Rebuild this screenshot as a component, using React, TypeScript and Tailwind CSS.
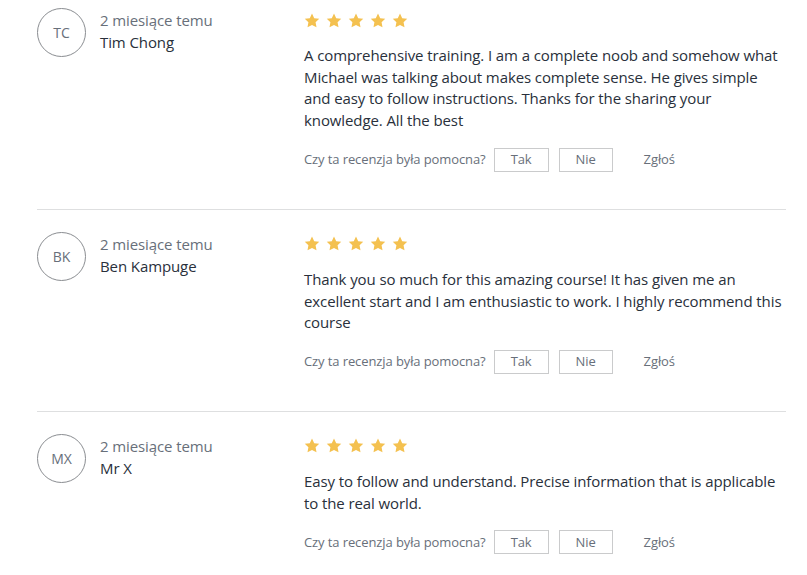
const REVIEWS = [
  {
    initials: "TC",
    when: "2 miesiące temu",
    name: "Tim Chong",
    text: "A comprehensive training. I am a complete noob and somehow what Michael was talking about makes complete sense. He gives simple and easy to follow instructions. Thanks for the sharing your knowledge. All the best",
  },
  {
    initials: "BK",
    when: "2 miesiące temu",
    name: "Ben Kampuge",
    text: "Thank you so much for this amazing course! It has given me an excellent start and I am enthusiastic to work. I highly recommend this course",
  },
  {
    initials: "MX",
    when: "2 miesiące temu",
    name: "Mr X",
    text: "Easy to follow and understand. Precise information that is applicable to the real world.",
  },
];

function Star() {
  return (
    <svg width="16" height="15" viewBox="0 0 24 23" className="block">
      <path
        d="M12 0.8l3.4 7.1 7.7 1-5.6 5.4 1.4 7.7L12 18.3 5.1 22l1.4-7.7L0.9 8.9l7.7-1z"
        fill="#f4c150"
      />
    </svg>
  );
}

function Review({ r, first, last }: { r: (typeof REVIEWS)[number]; first: boolean; last: boolean }) {
  return (
    <div className={`flex ${first ? "pt-[9px]" : "pt-[23px]"} ${last ? "" : "border-b border-[#dedfe0] pb-[37px]"}`}>
      <div className="flex w-[267px] shrink-0">
        <div className="mt-[-1px] flex h-[49px] w-[49px] shrink-0 items-center justify-center rounded-full border border-[#8a8d91] text-[14px] text-[#686f7a]">
          {r.initials}
        </div>
        <div className="ml-[14px] text-[15px] leading-[22px] tracking-[-0.1px]">
          <div className="text-[#686f7a]">{r.when}</div>
          <div className="text-[#29303b]">{r.name}</div>
        </div>
      </div>
      <div className="w-[488px]">
        <div className="flex h-[22px] items-center gap-[6px]">
          {[0, 1, 2, 3, 4].map((i) => (
            <Star key={i} />
          ))}
        </div>
        <p className="mt-[14px] text-[15px] leading-[21.7px] tracking-[-0.1px] text-[#29303b]">{r.text}</p>
        <div className="mt-[16px] flex items-center text-[13px] tracking-[-0.1px] text-[#686f7a]">
          <span>Czy ta recenzja była pomocna?</span>
          <button className="ml-[8px] h-[24px] w-[55px] border border-[#cacbcc] bg-white text-[13px] text-[#686f7a]">
            Tak
          </button>
          <button className="ml-[10px] h-[24px] w-[54px] border border-[#cacbcc] bg-white text-[13px] text-[#686f7a]">
            Nie
          </button>
          <span className="ml-[31px]">Zgłoś</span>
        </div>
      </div>
    </div>
  );
}

export default function App() {
  return (
    <div className="h-[575px] w-[807px] overflow-hidden bg-white pl-[37px] pr-[21px]" style={{ fontFamily: '"Open Sans", sans-serif' }}>
      {REVIEWS.map((r, i) => (
        <Review key={r.initials} r={r} first={i === 0} last={i === REVIEWS.length - 1} />
      ))}
    </div>
  );
}
